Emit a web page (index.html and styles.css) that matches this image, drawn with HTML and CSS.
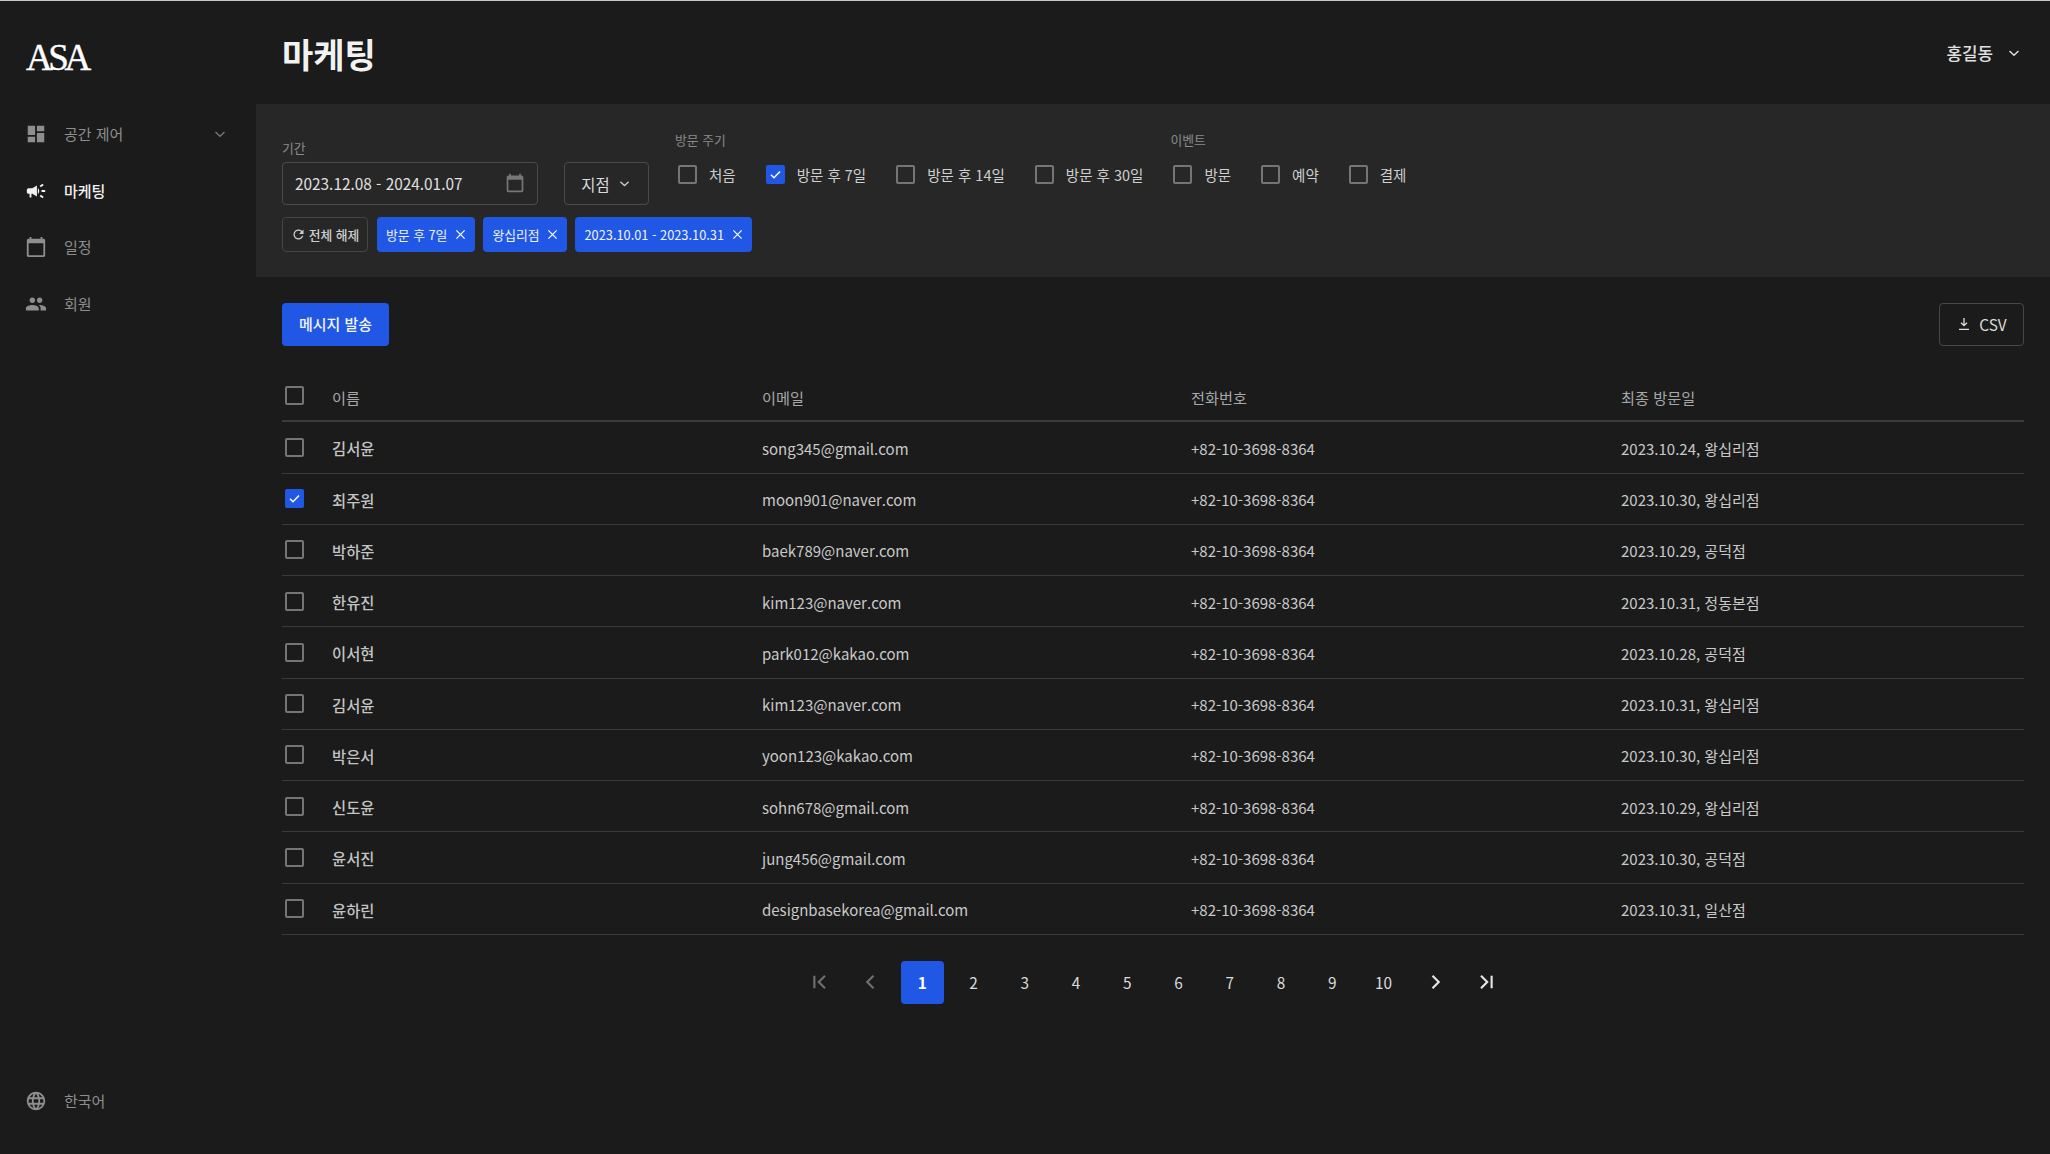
FILE: index.html
```html
<!DOCTYPE html>
<html lang="ko">
<head>
<meta charset="utf-8">
<title>마케팅</title>
<link rel="stylesheet" href="styles.css">
</head>
<body>
<div class="app">
  <aside class="sidebar">
    <div class="logo">ASA</div>
    <nav class="nav">
      <a class="nav-item">
        <svg class="nav-icon" viewBox="0 0 24 24"><path d="M3 13h8V3H3v10zm0 8h8v-6H3v6zm10 0h8V11h-8v10zm0-18v6h8V3h-8z"/></svg>
        <span class="nav-label">공간 제어</span>
        <svg class="nav-chev" viewBox="0 0 12 12"><path d="M1.5 4l4.5 4.2L10.5 4"/></svg>
      </a>
      <a class="nav-item active">
        <svg class="nav-icon" viewBox="0 0 24 24"><path d="M18 11v2h4v-2h-4zm-2 6.61c.96.71 2.21 1.65 3.2 2.39.4-.53.8-1.07 1.2-1.6-.99-.74-2.24-1.68-3.2-2.4-.4.54-.8 1.08-1.2 1.61zM20.4 5.6c-.4-.53-.8-1.07-1.2-1.6-.99.74-2.24 1.68-3.2 2.4.4.53.8 1.07 1.2 1.6.96-.72 2.21-1.65 3.2-2.4zM4 9c-1.1 0-2 .9-2 2v2c0 1.1.9 2 2 2h1v4h2v-4h1l5 3V6L8 9H4zm11.5 3c0-1.33-.58-2.53-1.5-3.35v6.69c.92-.81 1.5-2.01 1.5-3.34z"/></svg>
        <span class="nav-label">마케팅</span>
      </a>
      <a class="nav-item">
        <svg class="nav-icon" viewBox="0 0 24 24"><path d="M20 3h-1V1h-2v2H7V1H5v2H4c-1.1 0-2 .9-2 2v16c0 1.1.9 2 2 2h16c1.1 0 2-.9 2-2V5c0-1.1-.9-2-2-2zm0 18H4V8h16v13z"/></svg>
        <span class="nav-label">일정</span>
      </a>
      <a class="nav-item">
        <svg class="nav-icon" viewBox="0 0 24 24"><path d="M16 11c1.66 0 2.99-1.34 2.99-3S17.66 5 16 5c-1.66 0-3 1.34-3 3s1.34 3 3 3zm-8 0c1.66 0 2.99-1.34 2.99-3S9.66 5 8 5C6.34 5 5 6.34 5 8s1.34 3 3 3zm0 2c-2.33 0-7 1.17-7 3.5V19h14v-2.5c0-2.33-4.67-3.5-7-3.5zm8 0c-.29 0-.62.02-.97.05 1.16.84 1.97 1.97 1.97 3.45V19h6v-2.5c0-2.33-4.67-3.5-7-3.5z"/></svg>
        <span class="nav-label">회원</span>
      </a>
    </nav>
    <a class="nav-item lang">
      <svg class="nav-icon" viewBox="0 0 24 24"><path d="M11.99 2C6.47 2 2 6.48 2 12s4.47 10 9.99 10C17.52 22 22 17.52 22 12S17.52 2 11.99 2zm6.93 6h-2.95c-.32-1.25-.78-2.45-1.38-3.56 1.84.63 3.37 1.91 4.33 3.56zM12 4.04c.83 1.2 1.48 2.53 1.91 3.96h-3.82c.43-1.43 1.08-2.76 1.91-3.96zM4.26 14C4.1 13.36 4 12.69 4 12s.1-1.36.26-2h3.38c-.08.66-.14 1.32-.14 2 0 .68.06 1.34.14 2H4.26zm.82 2h2.95c.32 1.25.78 2.45 1.38 3.56-1.84-.63-3.37-1.9-4.33-3.56zm2.95-8H5.08c.96-1.66 2.49-2.93 4.33-3.56C8.81 5.55 8.35 6.75 8.03 8zM12 19.96c-.83-1.2-1.48-2.53-1.91-3.96h3.82c-.43 1.43-1.08 2.76-1.91 3.96zM14.34 14H9.66c-.09-.66-.16-1.32-.16-2 0-.68.07-1.35.16-2h4.68c.09.65.16 1.32.16 2 0 .68-.07 1.34-.16 2zm.25 5.56c.6-1.11 1.06-2.31 1.38-3.56h2.95c-.96 1.65-2.49 2.93-4.33 3.56zM16.36 14c.08-.66.14-1.32.14-2 0-.68-.06-1.34-.14-2h3.38c.16.64.26 1.31.26 2s-.1 1.36-.26 2h-3.38z"/></svg>
      <span class="nav-label">한국어</span>
    </a>
  </aside>

  <main class="main">
    <header class="topbar">
      <h1 class="title">마케팅</h1>
      <div class="user">
        <span>홍길동</span>
        <svg class="user-chev" viewBox="0 0 12 12"><path d="M1.5 4l4.5 4.2L10.5 4"/></svg>
      </div>
    </header>

    <section class="filters">
      <div class="filter-top">
        <div class="field">
          <div class="field-label">기간</div>
          <div class="date-input">
            <span>2023.12.08 - 2024.01.07</span>
            <svg class="cal" viewBox="0 0 24 24"><path d="M20 3h-1V1h-2v2H7V1H5v2H4c-1.1 0-2 .9-2 2v16c0 1.1.9 2 2 2h16c1.1 0 2-.9 2-2V5c0-1.1-.9-2-2-2zm0 18H4V8h16v13z"/></svg>
          </div>
        </div>
        <div class="select">지점<svg class="select-chev" viewBox="0 0 12 12"><path d="M1.5 4l4.5 4.2L10.5 4"/></svg></div>
        <div class="check-group cycle">
          <div class="group-label">방문 주기</div>
          <div class="checks">
            <label class="check"><span class="box"></span>처음</label>
            <label class="check"><span class="box on"><svg viewBox="0 0 16 16"><path d="M3.2 8.2l3.2 3.2 6.4-6.6"/></svg></span>방문 후 7일</label>
            <label class="check"><span class="box"></span>방문 후 14일</label>
            <label class="check"><span class="box"></span>방문 후 30일</label>
          </div>
        </div>
        <div class="check-group">
          <div class="group-label">이벤트</div>
          <div class="checks">
            <label class="check"><span class="box"></span>방문</label>
            <label class="check"><span class="box"></span>예약</label>
            <label class="check"><span class="box"></span>결제</label>
          </div>
        </div>
      </div>
      <div class="chips">
        <button class="reset">
          <svg class="reset-icon" viewBox="0 0 24 24"><path d="M17.65 6.35C16.2 4.9 14.21 4 12 4c-4.42 0-7.99 3.58-7.99 8s3.57 8 7.99 8c3.73 0 6.84-2.55 7.73-6h-2.08c-.82 2.33-3.04 4-5.65 4-3.31 0-6-2.69-6-6s2.69-6 6-6c1.66 0 3.14.69 4.22 1.78L13 11h7V4l-2.35 2.35z"/></svg>전체 해제
        </button>
        <span class="chip">방문 후 7일<svg class="chip-x" viewBox="0 0 12 12"><path d="M1.5 1.5l9 9M10.5 1.5l-9 9"/></svg></span>
        <span class="chip">왕십리점<svg class="chip-x" viewBox="0 0 12 12"><path d="M1.5 1.5l9 9M10.5 1.5l-9 9"/></svg></span>
        <span class="chip">2023.10.01 - 2023.10.31<svg class="chip-x" viewBox="0 0 12 12"><path d="M1.5 1.5l9 9M10.5 1.5l-9 9"/></svg></span>
      </div>
    </section>

    <section class="content">
      <div class="actions">
        <button class="primary">메시지 발송</button>
        <button class="csv">
          <svg class="csv-icon" viewBox="0 0 24 24"><path d="M12 3v11M7.5 10l4.5 4.5 4.5-4.5M4.5 20h15"/></svg>CSV
        </button>
      </div>

      <div class="table">
        <div class="row head"><span class="box"></span><span>이름</span><span>이메일</span><span>전화번호</span><span>최종 방문일</span></div>
        <div class="row"><span class="box"></span><span class="name">김서윤</span><span>song345@gmail.com</span><span>+82-10-3698-8364</span><span>2023.10.24, 왕십리점</span></div>
        <div class="row"><span class="box on"><svg viewBox="0 0 16 16"><path d="M3.2 8.2l3.2 3.2 6.4-6.6"/></svg></span><span class="name">최주원</span><span>moon901@naver.com</span><span>+82-10-3698-8364</span><span>2023.10.30, 왕십리점</span></div>
        <div class="row"><span class="box"></span><span class="name">박하준</span><span>baek789@naver.com</span><span>+82-10-3698-8364</span><span>2023.10.29, 공덕점</span></div>
        <div class="row"><span class="box"></span><span class="name">한유진</span><span>kim123@naver.com</span><span>+82-10-3698-8364</span><span>2023.10.31, 정동본점</span></div>
        <div class="row"><span class="box"></span><span class="name">이서현</span><span>park012@kakao.com</span><span>+82-10-3698-8364</span><span>2023.10.28, 공덕점</span></div>
        <div class="row"><span class="box"></span><span class="name">김서윤</span><span>kim123@naver.com</span><span>+82-10-3698-8364</span><span>2023.10.31, 왕십리점</span></div>
        <div class="row"><span class="box"></span><span class="name">박은서</span><span>yoon123@kakao.com</span><span>+82-10-3698-8364</span><span>2023.10.30, 왕십리점</span></div>
        <div class="row"><span class="box"></span><span class="name">신도윤</span><span>sohn678@gmail.com</span><span>+82-10-3698-8364</span><span>2023.10.29, 왕십리점</span></div>
        <div class="row"><span class="box"></span><span class="name">윤서진</span><span>jung456@gmail.com</span><span>+82-10-3698-8364</span><span>2023.10.30, 공덕점</span></div>
        <div class="row"><span class="box"></span><span class="name">윤하린</span><span>designbasekorea@gmail.com</span><span>+82-10-3698-8364</span><span>2023.10.31, 일산점</span></div>
      </div>

      <nav class="pager">
        <a class="page dim"><svg viewBox="0 0 16 16"><path d="M3.5 3v10M12 3L7 8l5 5"/></svg></a>
        <a class="page dim"><svg viewBox="0 0 16 16"><path d="M10 3L5 8l5 5"/></svg></a>
        <a class="page current">1</a>
        <a class="page">2</a>
        <a class="page">3</a>
        <a class="page">4</a>
        <a class="page">5</a>
        <a class="page">6</a>
        <a class="page">7</a>
        <a class="page">8</a>
        <a class="page">9</a>
        <a class="page">10</a>
        <a class="page"><svg viewBox="0 0 16 16"><path d="M6 3l5 5-5 5"/></svg></a>
        <a class="page"><svg viewBox="0 0 16 16"><path d="M4 3l5 5-5 5M12.5 3v10"/></svg></a>
      </nav>
    </section>
  </main>
</div>
</body>
</html>
```

FILE: styles.css
```css
* { box-sizing: border-box; }
html, body { margin: 0; height: 100%; }
body {
  background: #1b1b1b;
  color: #e6e6e6;
  font-family: "Noto Sans CJK KR", "Noto Sans", sans-serif;
  font-size: 15.36px;
  overflow: hidden;
}
button { font-family: inherit; cursor: pointer; }
svg { display: block; flex: none; }

.app {
  display: flex;
  height: 1154px;
  border-top: 1px solid #c9c9c9;
}

/* Sidebar */
.sidebar {
  width: 256px;
  flex: none;
  display: flex;
  flex-direction: column;
  padding: 0 26px;
}
.logo {
  font-family: "Liberation Serif", serif;
  font-size: 37px;
  line-height: 42px;
  letter-spacing: -4.4px;
  -webkit-text-stroke: 0.4px #fff;
  color: #fff;
  margin-top: 36px;
  height: 42px;
}
.nav {
  display: flex;
  flex-direction: column;
  margin-top: 27.3px;
}
.nav-item {
  display: flex;
  align-items: center;
  height: 56.4px;
  color: #8e8e8e;
  gap: 18px;
  font-size: 15px;
}
.nav-item.active { color: #f2f2f2; font-weight: 500; }
.nav-icon { width: 20px; height: 20px; fill: currentColor; transform: scale(1.1); }
.nav-label { flex: 1; line-height: 20px; }
.nav-chev { width: 12px; height: 12px; fill: none; stroke: #777; stroke-width: 1.4; margin-right: 4px; }
.lang { margin-top: auto; margin-bottom: 25px; }

/* Top bar */
.main { flex: 1; min-width: 0; display: flex; flex-direction: column; }
.topbar {
  height: 103px;
  flex: none;
  display: flex;
  align-items: center;
  justify-content: space-between;
  padding: 0 26px;
}
.title { margin: 3px 0 0; font-size: 34px; font-weight: 700; color: #f2f2f2; line-height: 48px; }
.user {
  display: flex;
  align-items: center;
  gap: 15px;
  color: #e0e0e0;
  font-size: 16.9px;
  font-weight: 500;
  margin-right: 4px;
}
.user-chev { width: 12px; height: 12px; fill: none; stroke: #ddd; stroke-width: 1.5; }

/* Filters */
.filters {
  height: 173px;
  flex: none;
  background: #272727;
  padding: 20px 26px 0;
}
.filter-top { display: flex; align-items: flex-start; }
.field { width: 256px; margin-top: 13px; }
.field-label { font-size: 12.8px; line-height: 22px; color: #8a8a8a; margin-bottom: 3px; }
.date-input {
  height: 43px;
  border: 1px solid #4a4a4a;
  border-radius: 4px;
  display: flex;
  align-items: center;
  justify-content: space-between;
  padding: 0 12px 1px 12px;
  font-size: 15.36px;
  color: #e0e0e0;
}
.cal { width: 20px; height: 20px; fill: #777; }
.select {
  margin: 38px 0 0 26px;
  width: 85px;
  height: 43px;
  border: 1px solid #4a4a4a;
  border-radius: 4px;
  display: flex;
  align-items: center;
  justify-content: center;
  gap: 9px;
  color: #dcdcdc;
  padding-right: 2px;
}
.select-chev { width: 11px; height: 11px; fill: none; stroke: #ccc; stroke-width: 1.4; }
.check-group { margin-top: 5px; }
.cycle { margin: 5px 27px 0 26px; }
.group-label { font-size: 12.8px; line-height: 22px; color: #8a8a8a; margin-bottom: 14px; }
.checks { display: flex; gap: 30px; }
.check { display: flex; align-items: center; gap: 12px; color: #cfcfcf; font-size: 14.5px; line-height: 19px; height: 19px; }
.check:first-child { margin-left: 3px; }
.box {
  width: 19px;
  height: 19px;
  flex: none;
  border: 2px solid #757575;
  border-radius: 2px;
  display: block;
}
.box.on { background: #2058e5; border-color: #2058e5; }
.box svg { width: 15px; height: 15px; fill: none; stroke: #fff; stroke-width: 1.6; }

.chips { display: flex; gap: 8px; margin-top: 12px; }
.reset {
  width: 86px;
  height: 35px;
  padding: 0;
  margin-right: 1px;
  background: none;
  border: 1px solid #444;
  border-radius: 4px;
  color: #cfcfcf;
  font-size: 12.8px;
  font-weight: 500;
  display: flex;
  align-items: center;
  justify-content: center;
  gap: 3px;
}
.reset-icon { width: 15px; height: 15px; fill: #cfcfcf; }
.chip {
  height: 35px;
  background: #2058e5;
  border-radius: 4px;
  color: #f0f4ff;
  font-size: 12.8px;
  display: flex;
  align-items: center;
  gap: 8px;
  padding: 0 9px 0 9px;
}
.chip-x { width: 11px; height: 11px; fill: none; stroke: #fff; stroke-width: 1.3; }

/* Content */
.content { flex: 1; padding: 26px 26px 0; }
.actions { display: flex; justify-content: space-between; height: 43px; }
.primary {
  width: 107px;
  height: 43px;
  background: #2058e5;
  border: 0;
  border-radius: 4px;
  color: #f2f5ff;
  font-size: 15px;
  font-weight: 500;
  padding: 0 0 2px;
}
.csv {
  width: 85px;
  height: 43px;
  background: none;
  border: 1px solid #474747;
  border-radius: 4px;
  color: #dcdcdc;
  font-size: 15.36px;
  display: flex;
  align-items: center;
  justify-content: center;
  gap: 7px;
  padding: 0 0 2px;
}
.csv-icon { width: 16px; height: 16px; fill: none; stroke: #dcdcdc; stroke-width: 2; }

.table { margin-top: 25px; }
.row {
  display: grid;
  grid-template-columns: 50px 430px 429px 430px 1fr;
  align-items: center;
  height: 51.25px;
  border-bottom: 1px solid #3b3b3b;
  color: #c9c9c9;
  font-size: 15px;
}
.row > span:not(.box) { padding-top: 2px; }
.row .box { margin-left: 3px; }
.head { border-bottom: 2px solid #3b3b3b; color: #a8a8a8; font-size: 15.2px; }
.name { font-weight: 500; color: #c4c4c4; font-size: 15.36px; }

/* Pagination */
.pager {
  display: flex;
  justify-content: center;
  gap: 8.25px;
  margin-top: 26px;
}
.page {
  width: 43px;
  height: 43px;
  border-radius: 4px;
  display: flex;
  align-items: center;
  justify-content: center;
  color: #dcdcdc;
  font-size: 15.36px;
}
.page svg { width: 20px; height: 20px; fill: none; stroke: #e6e6e6; stroke-width: 1.7; }
.page.dim svg { stroke: #6f6f6f; }
.page.current { background: #2058e5; color: #fff; font-weight: 700; }
```
